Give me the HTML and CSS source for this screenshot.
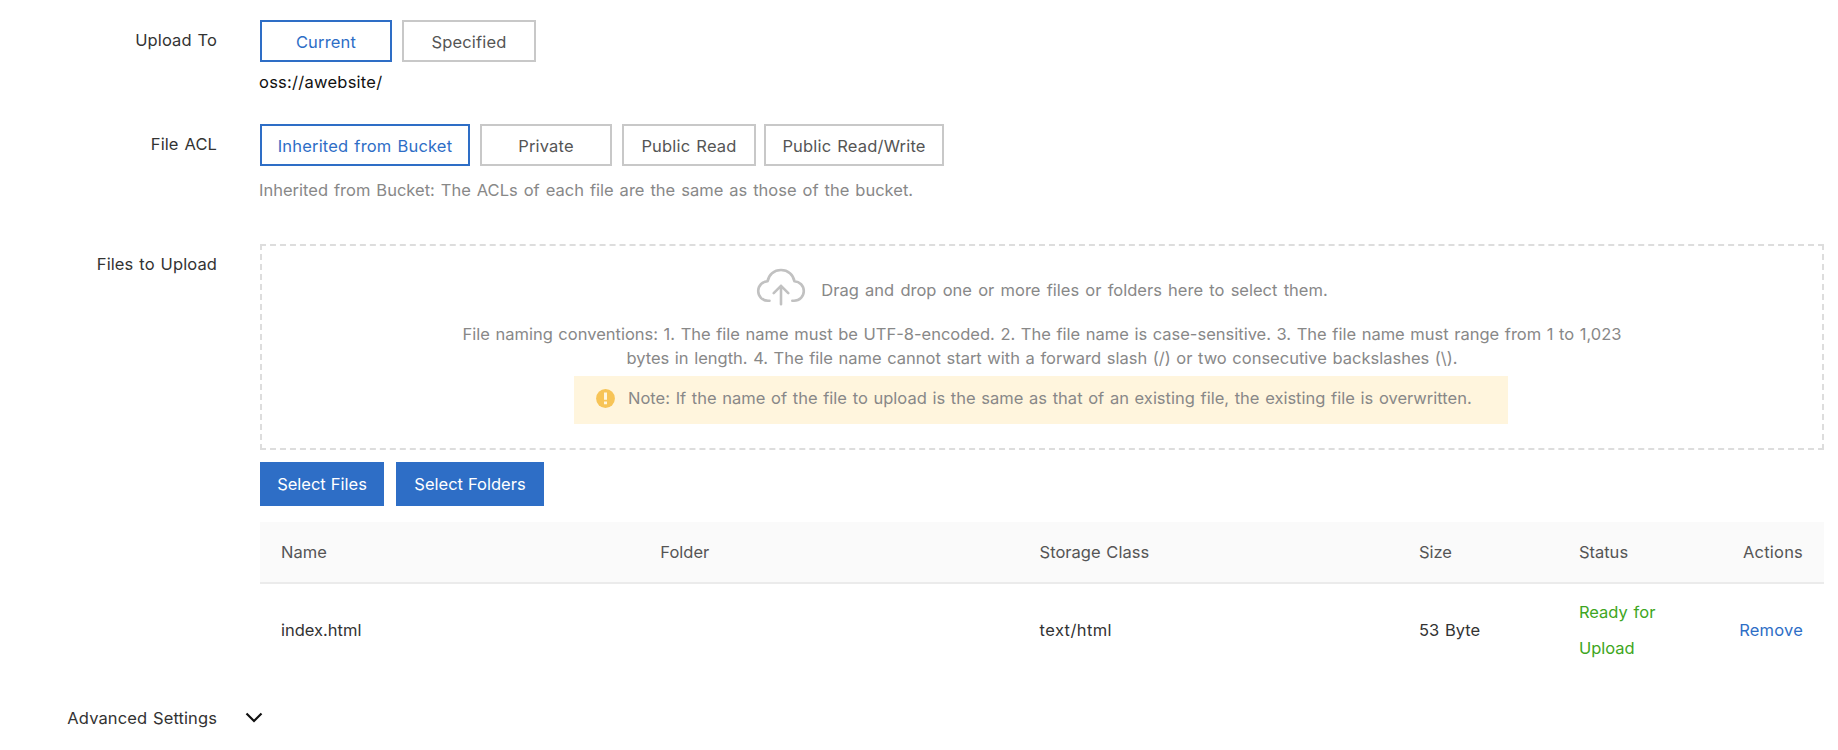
FILE: index.html
```html
<!DOCTYPE html>
<html lang="en">
<head>
<meta charset="utf-8">
<title>Upload</title>
<link rel="stylesheet" href="styles.css">
</head>
<body>
<main class="form">
  <section class="row row-target">
    <div class="label">Upload To</div>
    <div class="field">
      <div class="options">
        <button class="option option-active w-current">Current</button>
        <button class="option w-specified">Specified</button>
      </div>
      <div class="path"><span>oss://awebsite/</span></div>
    </div>
  </section>
  <section class="row row-acl">
    <div class="label">File ACL</div>
    <div class="field">
      <div class="options">
        <button class="option option-active w-inherited">Inherited from Bucket</button>
        <button class="option w-private">Private</button>
        <button class="option w-read">Public Read</button>
        <button class="option option-last w-write">Public Read/Write</button>
      </div>
      <div class="help"><span>Inherited from Bucket: The ACLs of each file are the same as those of the bucket.</span></div>
    </div>
  </section>
  <section class="row row-files">
    <div class="label">Files to Upload</div>
    <div class="field">
      <div class="dropzone">
        <div class="drop-head">
          <svg class="cloud" width="50" height="40" viewBox="0 0 50 40" fill="none" stroke="#c1c1c1" stroke-width="2.6" stroke-linecap="round" stroke-linejoin="round">
            <path d="M13.5 32.700H12C6.200 32.700 2.200 28.400 2.200 23C2.200 17.700 6.300 13.600 11.600 13.300C12.600 6.600 18 2 25 2S37.400 6.600 38.400 13.300C43.700 13.600 47.800 17.700 47.800 23C47.800 28.400 43.800 32.700 38 32.700H36.300"/>
            <path d="M25 36.300V17.900M17.700 25.200L25 17.900L32.300 25.200"/>
          </svg>
          <span class="drop-text">Drag and drop one or more files or folders here to select them.</span>
        </div>
        <p class="rules"><span>File naming conventions: 1. The file name must be UTF-8-encoded. 2. The file name is case-sensitive. 3. The file name must range from 1 to 1,023</span><br><span>bytes in length. 4. The file name cannot start with a forward slash (/) or two consecutive backslashes (\).</span></p>
        <div class="note">
          <svg class="warn" width="19" height="19" viewBox="0 0 19 19"><circle cx="9.500" cy="9.500" r="9.400" fill="#f7c457"/><path d="M8 3.600H11V10.800H8ZM8 12.500H11V15.300H8Z" fill="#fff6df"/></svg>
          <span>Note: If the name of the file to upload is the same as that of an existing file, the existing file is overwritten.</span>
        </div>
      </div>
      <div class="actions">
        <button class="primary w-files">Select Files</button>
        <button class="primary w-folders">Select Folders</button>
      </div>
      <table class="files">
        <colgroup><col class="c-wide"><col class="c-wide"><col class="c-wide"><col class="c-size"><col class="c-status"><col></colgroup>
        <thead>
          <tr><th>Name</th><th>Folder</th><th>Storage Class</th><th>Size</th><th>Status</th><th class="end">Actions</th></tr>
        </thead>
        <tbody>
          <tr><td>index.html</td><td></td><td class="type">text/html</td><td>53 Byte</td><td class="ready">Ready for<br>Upload</td><td class="end"><a class="remove">Remove</a></td></tr>
        </tbody>
      </table>
    </div>
  </section>
  <section class="row row-advanced">
    <div class="label">Advanced Settings</div>
    <svg class="chevron" width="18" height="12" viewBox="0 0 18 12" fill="none" stroke="#111" stroke-width="2.200"><path d="M1.500 1.500L9 9L16.500 1.500"/></svg>
  </section>
</main>
</body>
</html>
```
FILE: styles.css
```css
* { box-sizing: border-box; }
body {
  margin: 0;
  background: #fff;
  color: #333;
  font: 16.5px/24px Inter, "Liberation Sans", sans-serif;
  word-spacing: 1.2px;
}
button { font: inherit; padding: 0; border-radius: 0; white-space: nowrap; word-spacing: inherit; }
.form { padding: 20px 14px 0 0; }
.row { display: flex; align-items: flex-start; }
.label { width: 217px; margin-right: 43px; text-align: right; flex: none; white-space: nowrap; letter-spacing: .1px; }
.field { flex: 1; min-width: 0; }
.row-target { height: 104px; }
.row-target .label, .row-acl .label { padding-top: 8px; }
.row-acl { height: 120px; }
.row-files .label { padding-top: 8px; }
.options { display: flex; gap: 10px; }
.option { height: 42px; padding-top: 2px; border: 2px solid #c8c8c8; background: #fff; color: #555; letter-spacing: .18px; }
.option-active { border-color: #2e6ec6; color: #2e6ec6; }
.option-last { margin-left: -2px; }
.w-current { width: 132px; }
.w-specified { width: 134px; }
.w-inherited { width: 210px; }
.w-private { width: 132px; }
.w-read { width: 134px; }
.w-write { width: 180px; }
.path { margin: 8px 0 0 -1px; color: #111; letter-spacing: .25px; }
.help { margin: 12px 0 0 -1px; color: #888; word-spacing: 1.35px; }
.dropzone {
  height: 206px;
  color: #888;
  padding-top: 22px;
  border: 2px dashed #ddd;
  display: flex;
  flex-direction: column;
  align-items: center;
}
.drop-head { display: flex; gap: 15px; height: 40px; align-items: center; }
.drop-text { padding-top: 4px; word-spacing: 1.6px; }
.cloud { flex: none; }
.rules { margin: 14px 0 0; text-align: center; white-space: nowrap; padding-bottom: 6px; word-spacing: .95px; }
.note {
  width: 934px;
  height: 48px;
  flex: none;
  margin-right: 2px;
  background: #fff5dd;
  display: flex;
  gap: 13px;
  padding: 10px 0 0 22px;
  white-space: nowrap;
  word-spacing: 1.05px;
}
.warn { margin-top: 3px; flex: none; }
.actions { display: flex; gap: 12px; margin: 12px 0 16px; }
.primary { height: 44px; border: 0; background: #2e6ec6; color: #fff; word-spacing: .4px; }
.w-files { width: 124px; }
.w-folders { width: 148px; }
.files { width: 100%; table-layout: fixed; border-collapse: separate; border-spacing: 0; }
.c-wide { width: 379.300px; }
.c-size { width: 160px; }
.c-status { width: 140px; }
.files th { height: 62px; background: #fafafa; border-bottom: 2px solid #ebebeb; font-weight: 400; color: #555; }
.files th, .files td { text-align: left; padding: 0 21px; line-height: 36px; white-space: nowrap; }
.files td { height: 92px; }
.files .end { text-align: right; letter-spacing: .2px; }
.files .type { letter-spacing: .4px; }
.files .ready { color: #3ea622; }
.remove { color: #2e6ec6; }
.row-advanced { margin-top: 30px; }
.row-advanced .label { margin-right: 28px; }
.chevron { margin-top: 6px; }
```
